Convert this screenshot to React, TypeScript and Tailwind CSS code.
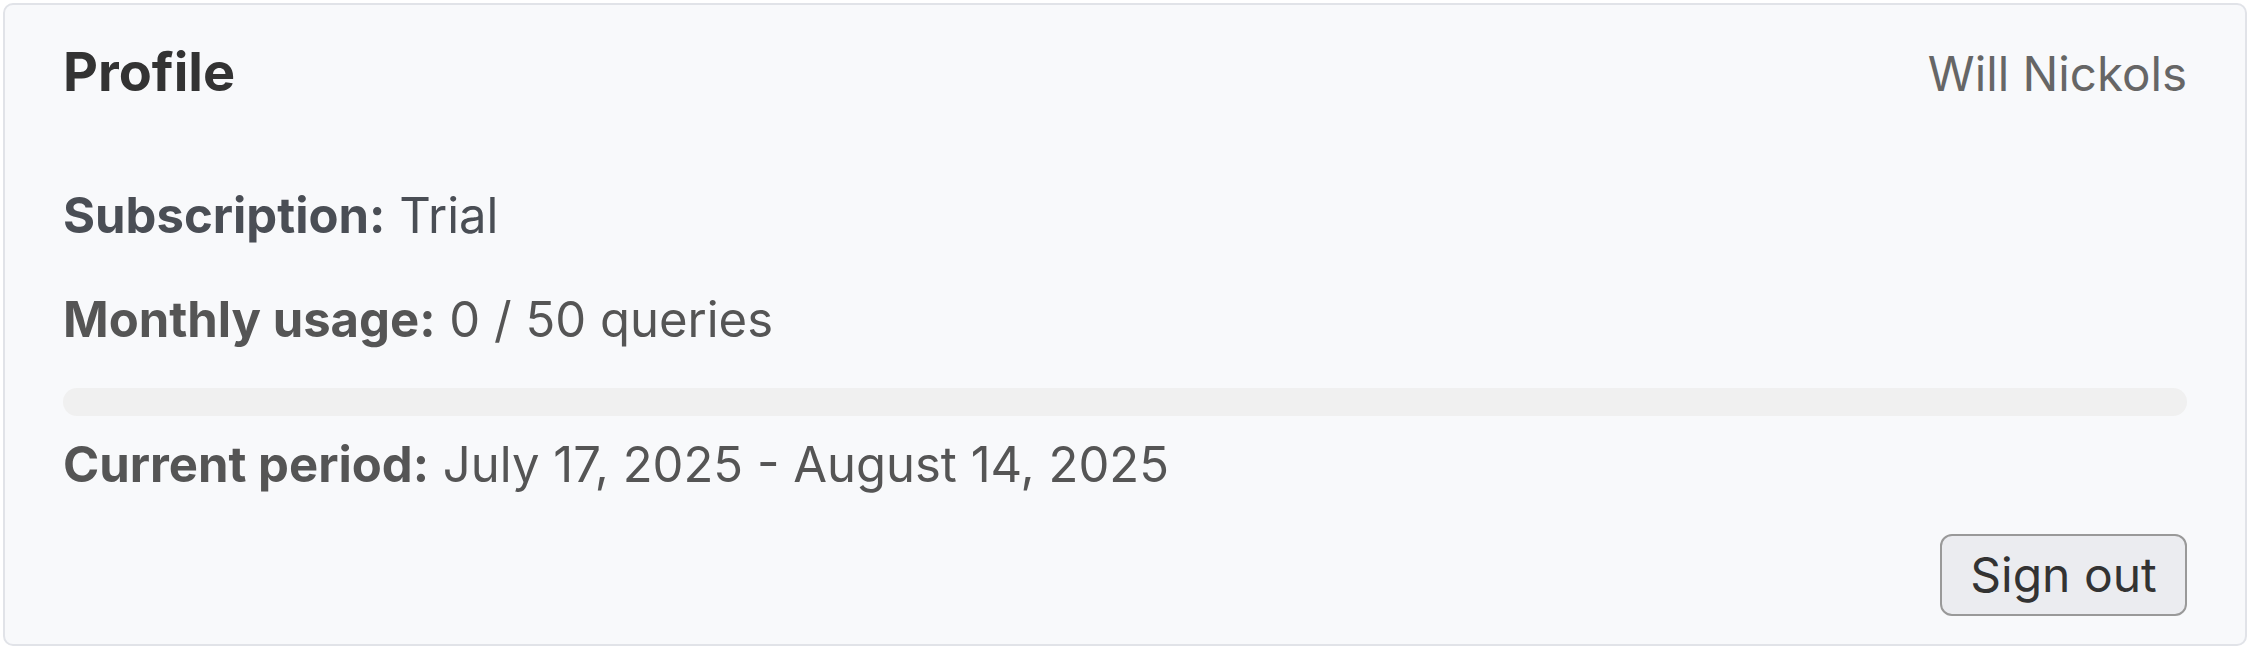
import React from 'react';

const usage = { used: 0, limit: 50 };

export default function App() {
  const pct = Math.min(100, (usage.used / usage.limit) * 100);

  return (
    <div className="min-h-screen bg-white p-[3px] font-['Inter','Liberation_Sans',sans-serif]">
      <div className="rounded-[10px] border-2 border-[#e1e3e8] bg-[#f8f9fb] px-[58px] pt-[33px] pb-[28px]">
        <div className="flex items-baseline justify-between">
          <h2 className="text-[54px] font-bold leading-[67px] text-[#333]">Profile</h2>
          <span className="text-[47.5px] leading-[56px] text-[#666]">Will Nickols</span>
        </div>

        <div className="mt-[83px] flex flex-col gap-[48px] text-[49px] leading-[56px]">
          <p className="text-[#4a4e55]">
            <span className="font-bold">Subscription:</span> Trial
          </p>
          <p className="text-[#555]">
            <span className="font-bold">Monthly usage:</span> {usage.used} / {usage.limit} queries
          </p>
        </div>

        <div className="mt-[40px] h-[28px] w-full overflow-hidden rounded-full bg-[#f0f0f0]">
          <div className="h-full rounded-full bg-[#4f46e5]" style={{ width: `${pct}%` }} />
        </div>

        <p className="mt-[21px] text-[49px] leading-[56px] text-[#555]">
          <span className="font-bold">Current period:</span> July 17, 2025 - August 14, 2025
        </p>

        <div className="mt-[41px] flex justify-end">
          <button className="h-[82px] w-[247px] rounded-[12px] border-2 border-[#999] bg-[#ebecf0] text-[48px] text-[#333]">
            Sign out
          </button>
        </div>
      </div>
    </div>
  );
}
